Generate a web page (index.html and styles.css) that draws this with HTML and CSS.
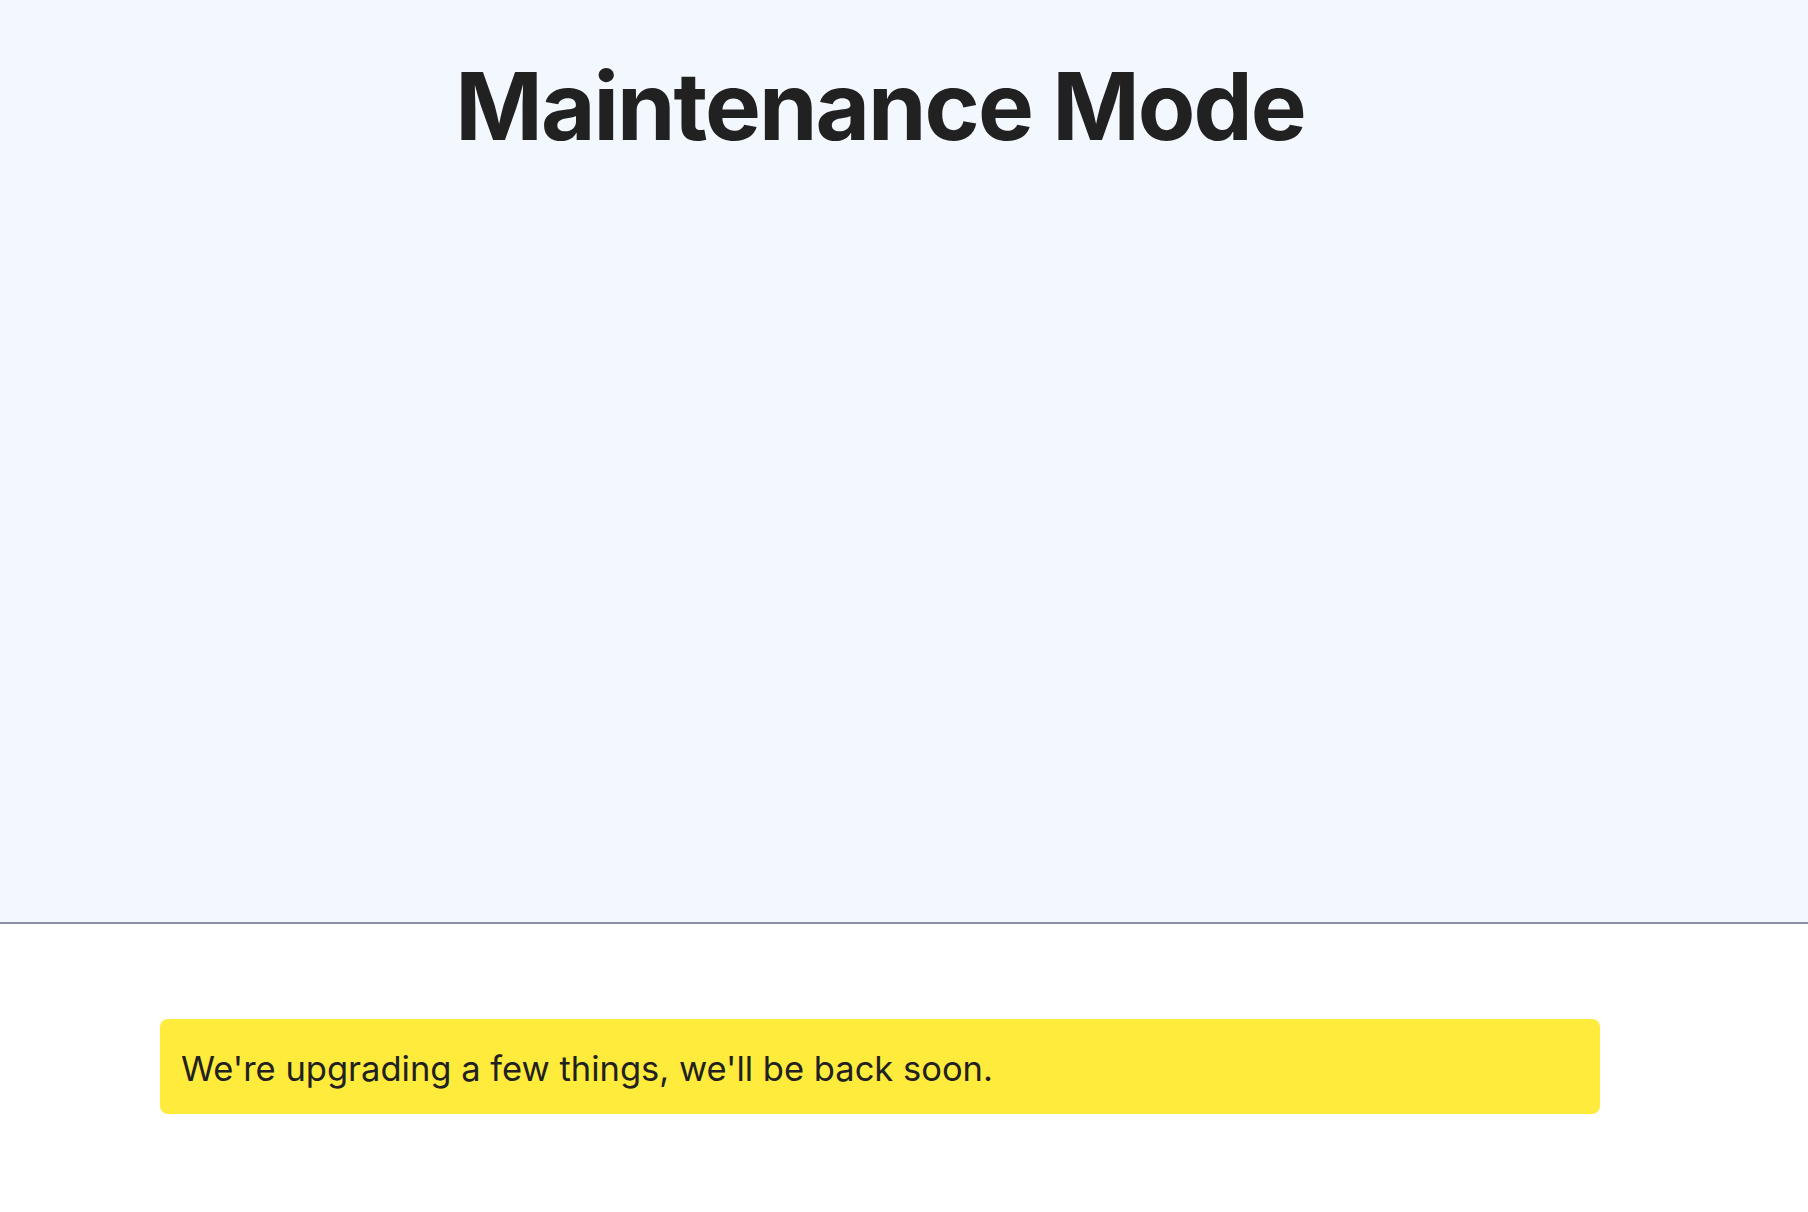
FILE: index.html
```html
<!DOCTYPE html>
<html>
  <head>
    <link rel="stylesheet" href="styles.css">
  </head>
  <body>
    <header class="hero">
      <div class="wrap">
        <h1 class="title">Maintenance Mode</h1>
      </div>
    </header>
    <main class="wrap content">
      <div class="notice">We're upgrading a few things, we'll be back soon.</div>
    </main>
  </body>
</html>
```

FILE: styles.css
```css
body {
  margin: 0;
  padding: 0;
  background-color: #ffffff;
  color: #212121;
  font-family: Inter, "Noto Sans", sans-serif;
}
.wrap {
  width: 1760px;
}
.hero {
  height: 922px;
  background-color: #f3f7fe;
  border-bottom: 2px solid #8a91a9;
}
.title {
  margin: 0;
  padding-top: 50px;
  text-align: center;
  font-size: 94px;
  font-weight: 700;
  line-height: 1.2;
  letter-spacing: -2px;
}
.content {
  padding: 95px 160px 0;
  box-sizing: border-box;
}
.notice {
  height: 95px;
  box-sizing: border-box;
  padding: 3px 21px 0;
  display: flex;
  align-items: center;
  background-color: #ffeb3b;
  border-radius: 8px;
  font-size: 34.5px;
}
```
